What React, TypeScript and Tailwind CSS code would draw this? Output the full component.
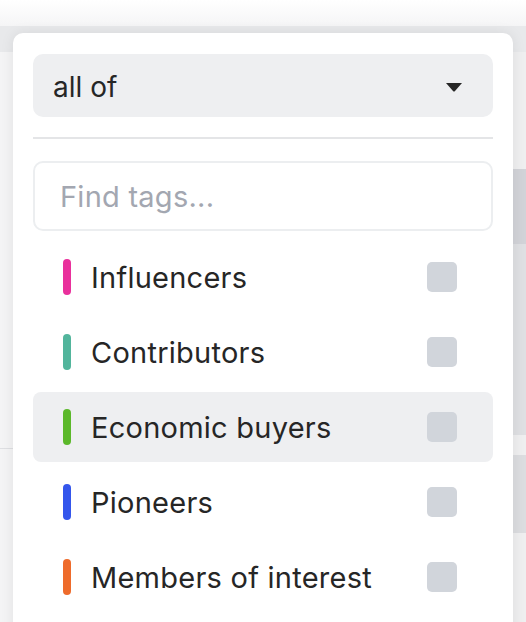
import { useState } from 'react'

type Tag = {
  id: string
  name: string
  color: string
}

const tags: Tag[] = [
  { id: 'influencers', name: 'Influencers', color: 'bg-[#e9309c]' },
  { id: 'contributors', name: 'Contributors', color: 'bg-[#52b59c]' },
  { id: 'economic', name: 'Economic buyers', color: 'bg-[#5bb82a]' },
  { id: 'pioneers', name: 'Pioneers', color: 'bg-[#3456ec]' },
  { id: 'members', name: 'Members of interest', color: 'bg-[#ee6b2b]' },
]

export default function App() {
  const [query, setQuery] = useState('')
  const [hovered] = useState('economic')

  return (
    <div className="relative h-[622px] w-[526px] overflow-hidden bg-[#f4f4f5] font-['Inter',sans-serif] text-[#262626]">
      {/* page behind the popover */}
      <div className="h-[26px] bg-gradient-to-b from-white to-[#f5f5f6]" />
      <div className="h-[26px] bg-[#e8e9eb]" />
      <div className="flex">
        <div className="flex-1">
          <div className="h-[396px]" />
          <div className="h-px bg-[#dedfe2]" />
        </div>
        <div className="flex w-[13px] flex-col">
          <div className="h-[117px] bg-[#efeff0]" />
          <div className="h-[75px] bg-[#d2d3d8]" />
          <div className="h-[191px] bg-[#dfe0e3]" />
          <div className="h-[20px] bg-[#efeff0]" />
          <div className="h-[78px] bg-[#dcdde0]" />
          <div className="h-[100px] bg-[#efeff0]" />
        </div>
      </div>

      {/* tag filter popover */}
      <div className="absolute left-[13px] top-[33px] bottom-[-20px] w-[500px] rounded-[10px] bg-white px-[20px] pt-[21px] shadow-[0_0_14px_rgba(0,0,0,0.08)]">
        <button className="flex h-[63px] w-full items-center justify-between rounded-[10px] bg-[#eeeff1] pl-[20px] pr-[30px] text-[28px]">
          <span className="pt-[2px]">all of</span>
          <svg width="18" height="10" viewBox="0 0 18 10" className="mt-[3px]">
            <path d="M1 1h16l-7 8a1.4 1.4 0 0 1-2 0z" fill="#262626" />
          </svg>
        </button>

        <div className="mt-[20px] h-[2px] bg-[#e4e5e7]" />

        <input
          value={query}
          onChange={(e) => setQuery(e.target.value)}
          placeholder="Find tags..."
          className="mt-[22px] h-[70px] w-full rounded-[10px] border-2 border-[#eceef0] pl-[25px] text-[29px] tracking-[0.25px] outline-none placeholder:text-[#a3a7b1]"
        />

        <ul className="mt-[11px] flex flex-col gap-[5px]">
          {tags.map((tag) => (
            <li
              key={tag.id}
              className={`flex h-[70px] items-center rounded-[8px] pl-[30px] pr-[36px] ${
                hovered === tag.id ? 'bg-[#eeeff1]' : ''
              }`}
            >
              <span className={`h-[36px] w-[8px] rounded-full ${tag.color}`} />
              <span className="ml-[20px] flex-1 pt-[2px] text-[29px] tracking-[0.25px]">{tag.name}</span>
              <span className="h-[30px] w-[30px] rounded-[5px] bg-[#d1d5db]" />
            </li>
          ))}
        </ul>
      </div>
    </div>
  )
}
